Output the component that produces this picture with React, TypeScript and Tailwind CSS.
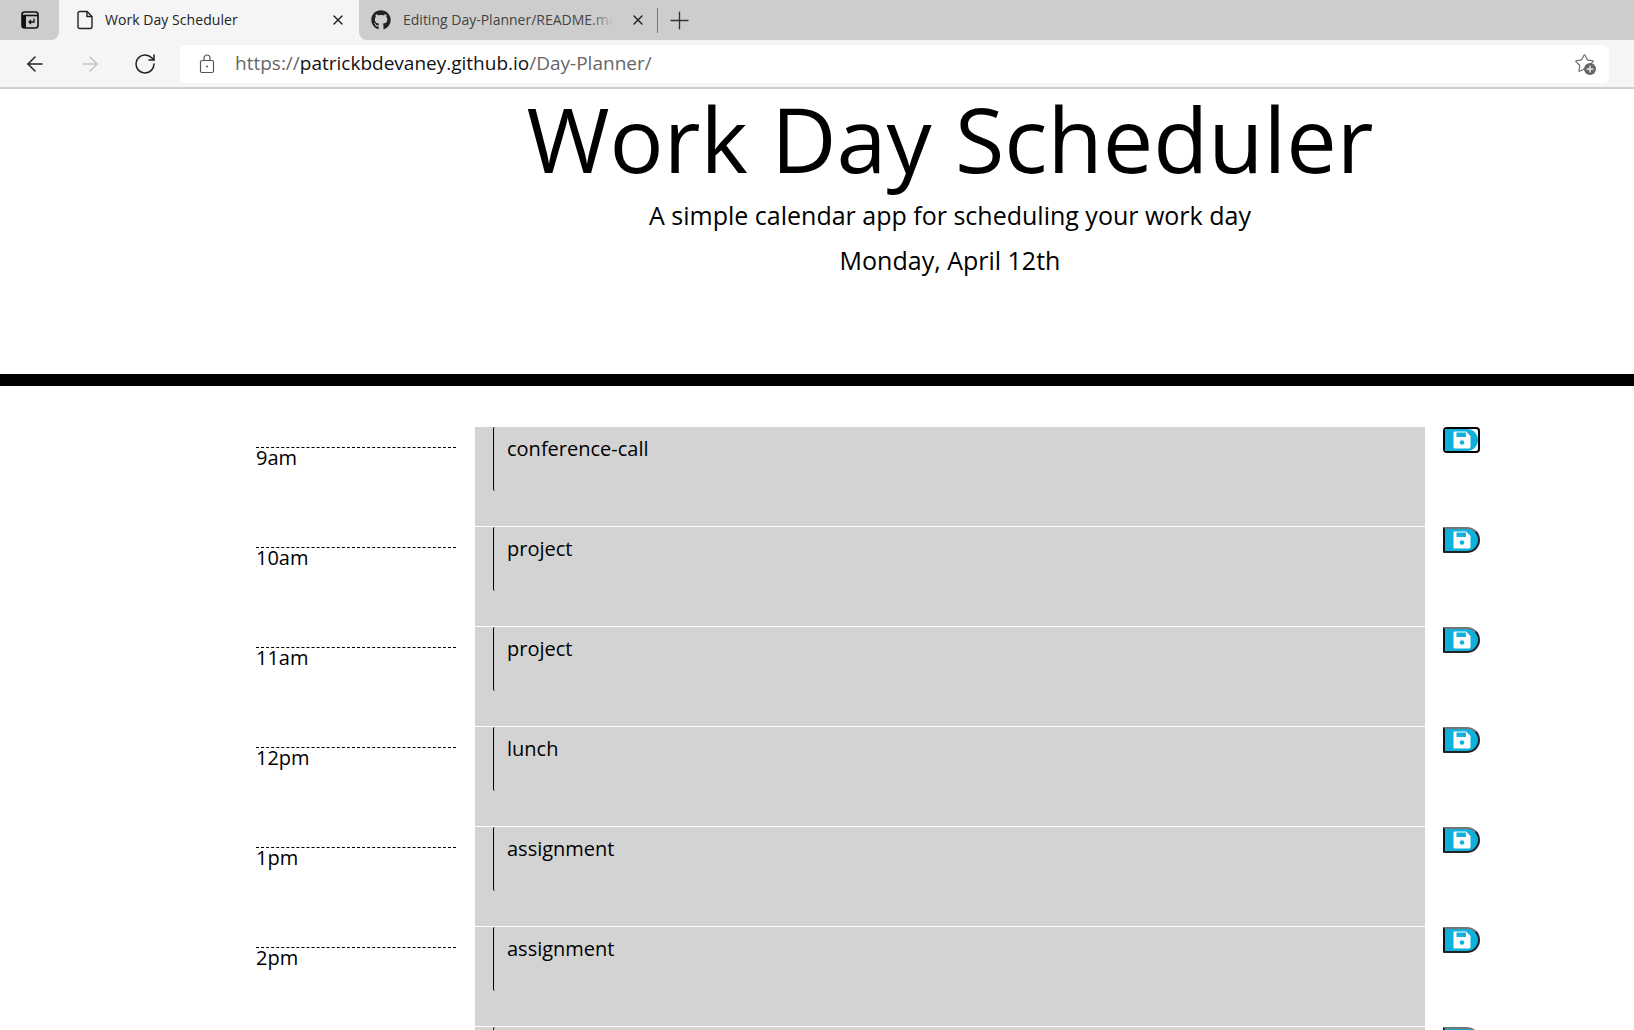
import { ArrowLeft, ArrowRight, RotateCw, Plus, X, Star } from "lucide-react";
import { FaGithub } from "react-icons/fa";

// the last row only peeks in at the bottom of the window, its label is below the fold
const hours = [
  { time: "9am", task: "conference-call" },
  { time: "10am", task: "project" },
  { time: "11am", task: "project" },
  { time: "12pm", task: "lunch" },
  { time: "1pm", task: "assignment" },
  { time: "2pm", task: "assignment" },
  { time: "", task: "" },
];

const SaveIcon = () => (
  <svg viewBox="0 0 18 18" className="h-[18px] w-[18px]">
    <path d="M1.5 0.5h11.5l4.5 4.5v11a1.5 1.5 0 0 1-1.5 1.5h-14.500a1.500 1.500 0 0 1-1-1.500v-14a1.500 1.500 0 0 1 1-1.500z" fill="#fff" />
    <rect x="3.500" y="1.500" width="9.500" height="4.500" fill="#0fb0dc" />
    <circle cx="9" cy="11.500" r="2.300" fill="#0fb0dc" />
  </svg>
);

const Browser = () => (
  <div className="font-['Open_Sans',sans-serif]">
    <div className="flex h-10 bg-[#f5f5f5]">
      <div className="flex h-10 w-[59px] items-center justify-center rounded-br-lg bg-[#cdcdcd]">
        <svg viewBox="0 0 18 18" className="h-[18px] w-[18px]" fill="none" stroke="#111" strokeWidth="1.6">
          <rect x="1" y="1" width="16" height="16" rx="2.500" />
          <path d="M1 4.500h16" />
          <rect x="1" y="4.500" width="4" height="12" fill="#111" stroke="none" />
          <path d="M13 7.500v3.500h-5M10 9l-2 2 2 2" strokeWidth="1.300" />
        </svg>
      </div>
      <div className="flex h-10 w-[300px] items-center rounded-t-lg bg-[#f5f5f5] pr-[13px] pl-4">
        <svg viewBox="0 0 20 20" className="h-5 w-5" fill="none" stroke="#222" strokeWidth="1.400">
          <path d="M5 1.500h7l5 5v10a2 2 0 0 1-2 2h-10a2 2 0 0 1-2-2v-13a2 2 0 0 1 2-2z" />
          <path d="M12 1.500v5h5" />
        </svg>
        <span className="ml-[10px] flex-1 text-sm tracking-[0.05px] text-[#222]">Work Day Scheduler</span>
        <X className="h-4 w-4 text-[#222]" />
      </div>
      <div className="flex h-10 flex-1 items-center rounded-bl-lg bg-[#cdcdcd] pl-[12px]">
        <FaGithub className="h-5 w-5 shrink-0 text-[#222]" />
        <div className="relative ml-[12px] w-[216px] shrink-0 overflow-hidden text-sm whitespace-nowrap text-[#444]">
          Editing Day-Planner/README.md
          <div className="absolute top-0 right-0 bottom-0 w-7 bg-gradient-to-r from-transparent to-[#cdcdcd] to-80%" />
        </div>
        <X className="ml-[11px] h-4 w-4 shrink-0 text-[#222]" />
        <div className="ml-[11px] h-[25px] w-px shrink-0 bg-[#777]" />
        <Plus className="ml-[7px] h-[29px] w-[29px] shrink-0 text-[#333]" strokeWidth={1.1} />
      </div>
    </div>
    <div className="flex h-[49px] items-center border-b-2 border-[#cfcfcf] bg-[#f5f5f5]">
      <ArrowLeft className="ml-[23px] h-6 w-6 text-[#222]" strokeWidth={1.5} />
      <ArrowRight className="ml-[31px] h-6 w-6 text-[#c4c4c4]" strokeWidth={1.5} />
      <RotateCw className="ml-[31px] h-6 w-6 text-[#222]" strokeWidth={1.5} />
      <div className="mr-[25px] ml-[23px] flex h-[38px] flex-1 items-center rounded-md bg-white">
        <svg viewBox="0 0 16 20" className="ml-[19px] h-5 w-4" fill="none" stroke="#555" strokeWidth="1.200">
          <rect x="1.500" y="6.500" width="13" height="12" rx="1.500" />
          <path d="M5 6.500v-2.500a3 3 0 0 1 6 0v2.500" />
          <circle cx="8" cy="12.500" r="1" fill="#555" stroke="none" />
        </svg>
        <span className="ml-[20px] flex-1 text-[19px] text-[#666]">
          https://<span className="text-[#111]">patrickbdevaney.github.io</span>/Day-Planner/
        </span>
        <div className="relative mr-[13px] h-[22px] w-[22px]">
          <Star className="h-[21px] w-[21px] text-[#666]" strokeWidth={1.25} />
          <div className="absolute right-0 bottom-0 flex h-3 w-3 items-center justify-center rounded-full bg-[#666]">
            <Plus className="h-[10px] w-[10px] text-white" strokeWidth={3} />
          </div>
        </div>
      </div>
    </div>
  </div>
);

const App = () => {
  return (
    <div className="h-[1030px] overflow-hidden bg-white font-['Open_Sans',sans-serif] text-black">
      <Browser />
      <header className="h-[297px] border-b-[12px] border-black pl-[266px] text-center">
        <h1 className="text-[90px] leading-[98px] font-normal">Work Day Scheduler</h1>
        <p className="mt-[10px] text-[25px] leading-9">A simple calendar app for scheduling your work day</p>
        <p className="mt-[9px] text-[25px] leading-9">Monday, April 12th</p>
      </header>
      <main className="mt-[41px] flex flex-col pl-[256px]">
        {hours.map((hour, i) => (
          <div key={i} className="flex h-[100px] shrink-0">
            <div className="mt-5 h-10 w-[200px] border-t border-dashed border-black text-xl leading-[20px]">{hour.time}</div>
            <div className="ml-[19px] h-[99px] w-[950px] bg-[#d3d3d3] pl-[18px]">
              <div className="h-[64px] rounded-l-[2px] border-l border-black pt-2 pl-[13px] text-xl">{hour.task}</div>
            </div>
            <button
              className={
                i === 0
                  ? "ml-[18px] h-[26px] w-[37px] rounded-[4px] border-2 border-black bg-white"
                  : "ml-[18px] flex h-[26px] w-[37px] items-center justify-center rounded-r-[14px] border-2 border-t-[#767676] border-r-[#222] border-b-[#222] border-l-[#111] bg-[#0fb0dc]"
              }
            >
              {i === 0 ? (
                <div className="flex h-full w-full items-center justify-center rounded-r-[12px] bg-[#0fb0dc]">
                  <SaveIcon />
                </div>
              ) : (
                <SaveIcon />
              )}
            </button>
          </div>
        ))}
      </main>
    </div>
  );
};

export default App;
